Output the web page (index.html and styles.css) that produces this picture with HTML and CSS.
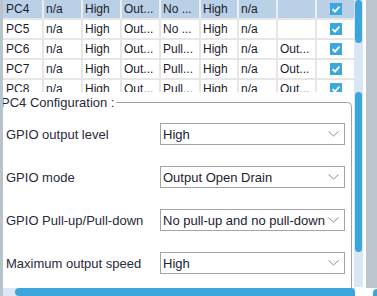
FILE: index.html
```html
<!DOCTYPE html>
<html lang="en">
<head>
    <meta charset="UTF-8">
    <meta name="viewport" content="width=device-width, initial-scale=1.0">
    <title>GPIO Configuration</title>
    <link rel="stylesheet" href="styles.css">
</head>
<body>

    <div class="edge-left"></div>

    <div class="workspace">
        <div class="pins-pane">
            <div class="table-wrap">
                <table class="pin-table">
                    <colgroup>
                        <col style="width: 40px">
                        <col style="width: 39px">
                        <col style="width: 39px">
                        <col style="width: 39px">
                        <col style="width: 40px">
                        <col style="width: 38px">
                        <col style="width: 39px">
                        <col style="width: 39px">
                        <col style="width: 38px">
                    </colgroup>
                    <tr class="selected">
                        <td>PC4</td><td>n/a</td><td>High</td><td>Out...</td><td>No ...</td><td>High</td><td>n/a</td><td></td>
                        <td class="check-cell"><span class="check"><svg width="12" height="12" viewBox="0 0 12 12"><path d="M2.6 6.2 L5 8.6 L9.4 3.6" fill="none" stroke="#fff" stroke-width="1.9"/></svg></span></td>
                    </tr>
                    <tr>
                        <td>PC5</td><td>n/a</td><td>High</td><td>Out...</td><td>No ...</td><td>High</td><td>n/a</td><td></td>
                        <td class="check-cell"><span class="check"><svg width="12" height="12" viewBox="0 0 12 12"><path d="M2.6 6.2 L5 8.6 L9.4 3.6" fill="none" stroke="#fff" stroke-width="1.9"/></svg></span></td>
                    </tr>
                    <tr>
                        <td>PC6</td><td>n/a</td><td>High</td><td>Out...</td><td>Pull...</td><td>High</td><td>n/a</td><td>Out...</td>
                        <td class="check-cell"><span class="check"><svg width="12" height="12" viewBox="0 0 12 12"><path d="M2.6 6.2 L5 8.6 L9.4 3.6" fill="none" stroke="#fff" stroke-width="1.9"/></svg></span></td>
                    </tr>
                    <tr>
                        <td>PC7</td><td>n/a</td><td>High</td><td>Out...</td><td>Pull...</td><td>High</td><td>n/a</td><td>Out...</td>
                        <td class="check-cell"><span class="check"><svg width="12" height="12" viewBox="0 0 12 12"><path d="M2.6 6.2 L5 8.6 L9.4 3.6" fill="none" stroke="#fff" stroke-width="1.9"/></svg></span></td>
                    </tr>
                    <tr>
                        <td>PC8</td><td>n/a</td><td>High</td><td>Out...</td><td>Pull...</td><td>High</td><td>n/a</td><td>Out...</td>
                        <td class="check-cell"><span class="check"><svg width="12" height="12" viewBox="0 0 12 12"><path d="M2.6 6.2 L5 8.6 L9.4 3.6" fill="none" stroke="#fff" stroke-width="1.9"/></svg></span></td>
                    </tr>
                </table>
            </div>
            <div class="vscroll">
                <div class="thumb thumb-pins"></div>
            </div>
        </div>

        <div class="config-pane">
            <div class="config-body">
                <fieldset class="config-frame">
                    <legend>PC4 Configuration :</legend>
                    <div class="config-grid">
                        <label>GPIO output level</label>
                        <div class="select">
                            <span>High</span>
                            <svg width="11" height="6" viewBox="0 0 11 6"><path d="M0.5 0.5 L5.5 5 L10.5 0.5" fill="none" stroke="#8c8c8c" stroke-width="1"/></svg>
                        </div>

                        <label>GPIO mode</label>
                        <div class="select">
                            <span>Output Open Drain</span>
                            <svg width="11" height="6" viewBox="0 0 11 6"><path d="M0.5 0.5 L5.5 5 L10.5 0.5" fill="none" stroke="#8c8c8c" stroke-width="1"/></svg>
                        </div>

                        <label>GPIO Pull-up/Pull-down</label>
                        <div class="select">
                            <span>No pull-up and no pull-down</span>
                            <svg width="11" height="6" viewBox="0 0 11 6"><path d="M0.5 0.5 L5.5 5 L10.5 0.5" fill="none" stroke="#8c8c8c" stroke-width="1"/></svg>
                        </div>

                        <label>Maximum output speed</label>
                        <div class="select">
                            <span>High</span>
                            <svg width="11" height="6" viewBox="0 0 11 6"><path d="M0.5 0.5 L5.5 5 L10.5 0.5" fill="none" stroke="#8c8c8c" stroke-width="1"/></svg>
                        </div>
                    </div>
                </fieldset>
            </div>
            <div class="vscroll">
                <div class="thumb thumb-config"></div>
            </div>
        </div>

        <div class="hscroll">
            <div class="hthumb"></div>
        </div>
    </div>

    <div class="edge-right">
        <div class="edge-fill"></div>
        <div class="edge-foot"><div class="foot-thumb"></div></div>
    </div>

</body>
</html>
```

FILE: styles.css
```css
body {
    margin: 0;
    width: 377px;
    height: 296px;
    overflow: hidden;
    display: flex;
    background-color: #ffffff;
    font-family: "Liberation Sans", Arial, sans-serif;
    color: #1d1d2c;
}

.edge-left {
    width: 3px;
    background-color: #b9c3ca;
}

.workspace {
    width: 363px;
    display: flex;
    flex-direction: column;
}

/* Pin table */
.pins-pane {
    height: 92px;
    display: flex;
}
.table-wrap {
    width: 351px;
    overflow: hidden;
}
.pin-table {
    border-collapse: collapse;
    table-layout: fixed;
    width: 351px;
    font-size: 12px;
}
.pin-table td {
    height: 18px;
    padding: 0 0 0 2px;
    border-right: 2px solid #e6e6e6;
    border-bottom: 2px solid #e6e6e6;
    white-space: nowrap;
    overflow: hidden;
    line-height: 18px;
}
.pin-table td:first-child {
    padding-left: 3px;
}
.pin-table tr.selected td {
    background-color: #bad0e7;
    border-right-color: #e9eff6;
}
.pin-table td.check-cell {
    padding: 0;
    text-align: center;
    border-right: none;
}
.check {
    display: inline-block;
    width: 12px;
    height: 12px;
    background-color: #3ba8dd;
    vertical-align: middle;
    margin-top: -2px;
}
.check svg {
    display: block;
}

/* Scrollbars */
.vscroll {
    width: 9px;
    margin-right: 3px;
    background-color: #d9e7f4;
    padding: 0 1px;
    box-sizing: border-box;
}
.thumb {
    background-color: #3aa6dc;
    border-radius: 4px;
}
.thumb-pins {
    height: 43px;
}
.thumb-config {
    height: 160px;
}
.hscroll {
    height: 8px;
    width: 352px;
    padding-left: 12px;
    box-sizing: border-box;
    background-color: #d9e7f4;
}
.hthumb {
    height: 8px;
    background-color: #3aa6dc;
    border-radius: 4px 4px 0 4px;
}

/* Configuration */
.config-pane {
    flex: 1;
    display: flex;
    min-height: 0;
}
.config-pane .vscroll {
    margin-bottom: 1px;
}
.config-body {
    width: 351px;
    overflow: hidden;
}
.config-frame {
    margin: 3px 2px 0 -2px;
    padding: 0;
    height: 300px;
    border: 1px solid #a3a3a3;
    border-left: none;
    border-bottom: none;
    border-radius: 0 5px 0 0;
}
.config-frame legend {
    padding: 0 2px 0 0;
    font-size: 13px;
    line-height: 15px;
    color: #2a2a3a;
}
.config-grid {
    display: grid;
    grid-template-columns: 154px 185px;
    row-gap: 21px;
    align-items: center;
    padding: 13px 0 0 5px;
    font-size: 13px;
    color: #2a2a3a;
}
.select {
    height: 22px;
    box-sizing: border-box;
    border: 1px solid #a5a5a5;
    display: flex;
    align-items: center;
    justify-content: space-between;
    padding: 0 5px 0 2px;
    color: #222230;
}
.select svg {
    display: block;
}

.edge-right {
    width: 11px;
    display: flex;
    flex-direction: column;
}
.edge-fill {
    flex: 1;
    background-color: #bcc5cb;
}
.edge-foot {
    height: 7px;
    padding: 1px 0 0 7px;
}
.foot-thumb {
    height: 7px;
    background-color: #3aa6dc;
    border-radius: 4px 0 0 0;
}
```
